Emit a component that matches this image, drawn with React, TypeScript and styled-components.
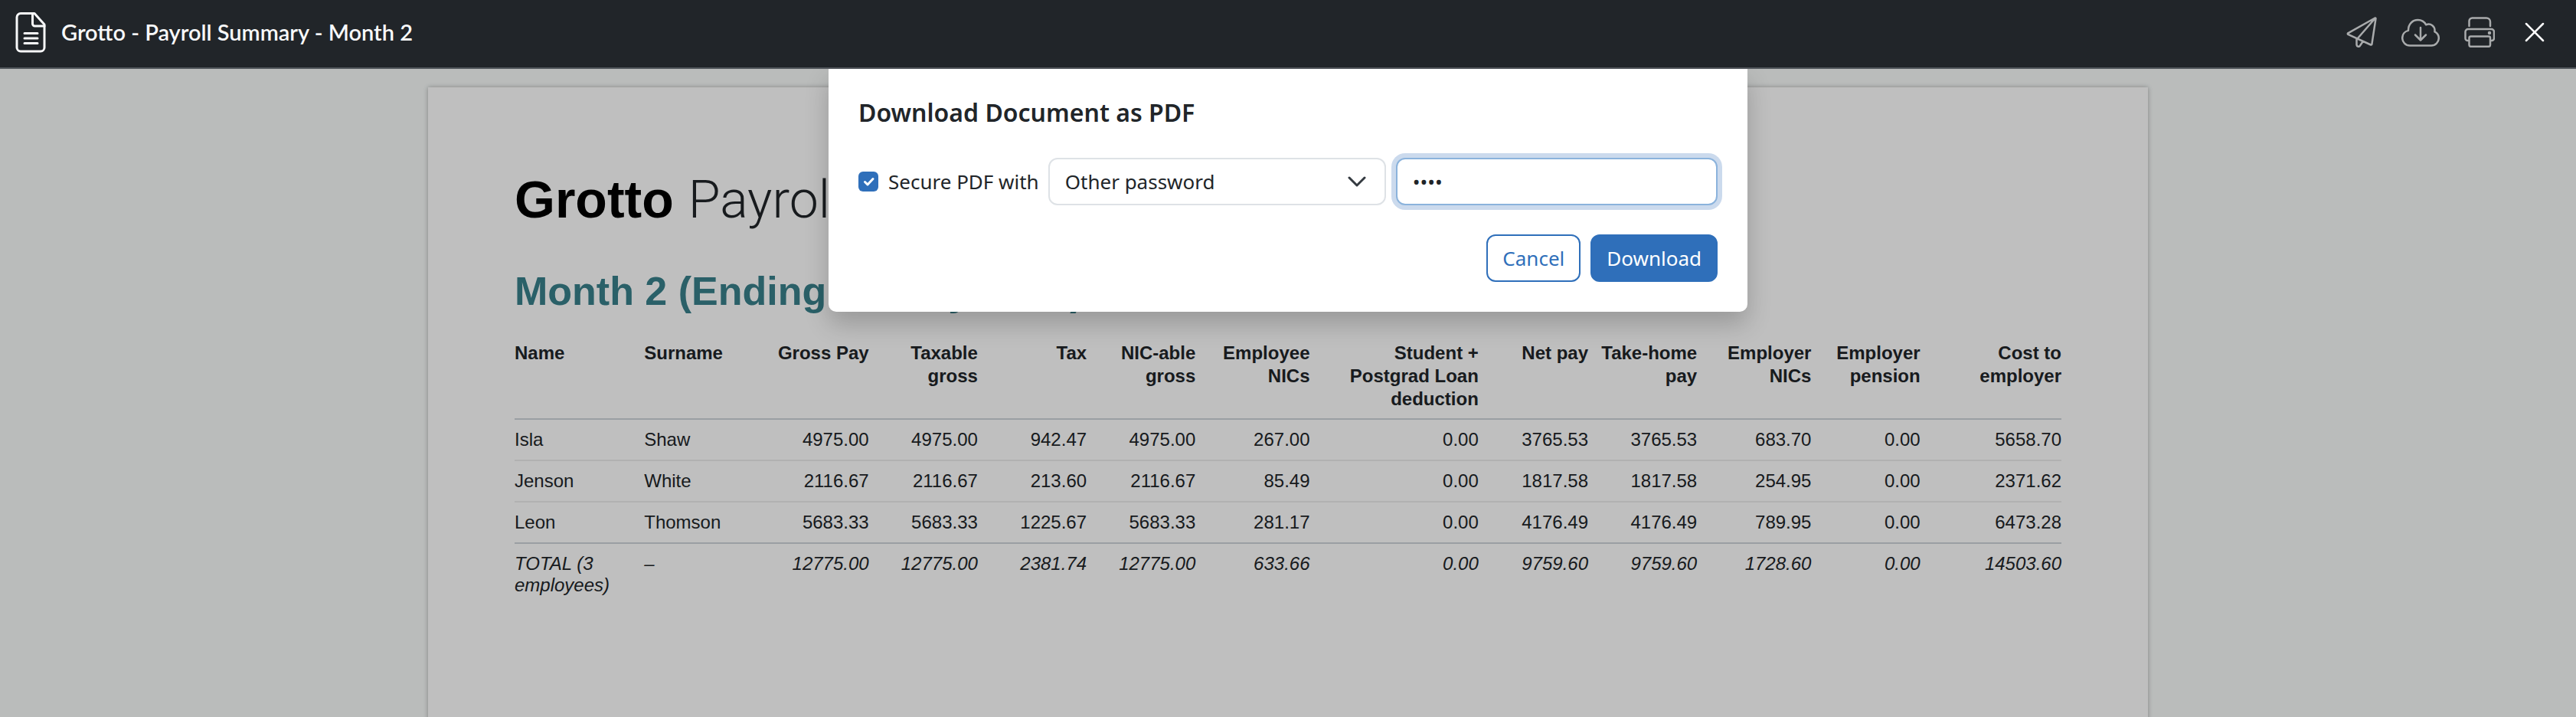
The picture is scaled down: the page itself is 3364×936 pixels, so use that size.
import React from "react";
import styled, { createGlobalStyle } from "styled-components";

const GlobalStyle = createGlobalStyle`
  *, *::before, *::after { box-sizing: border-box; }
  html, body, #root { height: 100%; }
  body {
    margin: 0;
    color: #212529;
    background: #f8fbfa;
    font-family: "Noto Sans", "Open Sans", sans-serif;
    overflow: hidden;
  }
  h1, h2, p { margin: 0; }
`;

const Viewer = styled.div`
  display: flex;
  flex-direction: column;
  height: 100%;
`;

const Toolbar = styled.header`
  display: flex;
  align-items: center;
  justify-content: space-between;
  height: 90px;
  flex-shrink: 0;
  padding: 0 34px 4px 20px;
  background: #212529;
  border-bottom: 2px solid #54595e;
`;

const ToolbarTitle = styled.div`
  display: flex;
  align-items: center;
  gap: 20px;
  color: #f8f9fa;
`;

const DocumentName = styled.h1`
  font-family: Lato, sans-serif;
  font-size: 29px;
  line-height: 36px;
  font-weight: 600;
  white-space: nowrap;
`;

const ToolbarActions = styled.nav`
  display: flex;
  align-items: center;
  gap: 32px;
`;

const IconButton = styled.button<{ $bright?: boolean }>`
  display: flex;
  padding: 0;
  border: 0;
  background: none;
  color: ${(p) => (p.$bright ? "#ffffff" : "#a9abac")};
  cursor: pointer;
`;

const Icon = styled.svg`
  display: block;
  fill: none;
  stroke: currentColor;
  stroke-linecap: round;
  stroke-linejoin: round;
`;

const Stage = styled.main`
  position: relative;
  flex: 1;
  min-height: 0;
  padding: 24px 24px 0;
  overflow: hidden;
`;

const Paper = styled.article`
  max-width: 2246px;
  min-height: 1588px;
  margin: 0 auto;
  padding: 113px;
  background: #ffffff;
  box-shadow: 0 0 6px rgba(0, 0, 0, 0.3);
  font-family: "Liberation Sans", Arial, sans-serif;
`;

const CompanyHeading = styled.h1`
  font-size: 68px;
  line-height: 66px;
  font-weight: 700;
  color: #000000;
  white-space: nowrap;
`;

const LightText = styled.span`
  font-family: Roboto, "Liberation Sans", sans-serif;
  font-weight: 300;
  color: #212529;
`;

const PeriodHeading = styled.h2`
  margin-top: 56px;
  font-size: 52px;
  line-height: 60px;
  font-weight: 700;
  color: #39808b;
  white-space: nowrap;
`;

const PayTable = styled.table`
  width: 100%;
  margin-top: 36px;
  border-collapse: collapse;
  table-layout: fixed;
  font-size: 24px;
  line-height: 28px;
`;

const HeadCell = styled.th<{ $left?: boolean }>`
  padding: 0 0 10px;
  line-height: 30px;
  font-weight: 700;
  text-align: ${(p) => (p.$left ? "left" : "right")};
  vertical-align: top;
  border-bottom: 2px solid #ced4da;
`;

const BodyRow = styled.tr`
  border-bottom: 2px solid #eceded;
  &:last-child { border-bottom-color: #ced4da; }
`;

const TotalRow = styled.tr`
  font-style: italic;
`;

const Cell = styled.td<{ $left?: boolean }>`
  padding: 12px 0;
  text-align: ${(p) => (p.$left ? "left" : "right")};
  vertical-align: top;
`;

const Backdrop = styled.div`
  position: absolute;
  inset: 0;
  display: flex;
  align-items: flex-start;
  justify-content: center;
  background: rgba(0, 0, 0, 0.25);
`;

const Dialog = styled.form`
  width: 1200px;
  max-width: 100%;
  padding: 35px 39px 39px;
  background: #ffffff;
  border-radius: 0 0 10px 10px;
  box-shadow: 0 16px 32px rgba(0, 0, 0, 0.2);
`;

const DialogTitle = styled.h2`
  font-size: 32px;
  line-height: 44px;
  font-weight: 600;
`;

const FieldRow = styled.div`
  display: flex;
  align-items: center;
  margin-top: 37px;
  font-size: 26px;
`;

const SecureLabel = styled.label`
  display: flex;
  align-items: center;
  gap: 13px;
  flex-shrink: 0;
  margin-right: 12px;
  line-height: 36px;
`;

const Tick = styled.input`
  appearance: none;
  width: 26px;
  height: 26px;
  margin: 0;
  border-radius: 6px;
  background: #2f6fba;
`;

const TickBox = styled.span`
  display: grid;
  > * { grid-area: 1 / 1; }
  > svg { pointer-events: none; }
`;

const SelectBox = styled.span`
  display: grid;
  align-items: center;
  flex: 0 1 441px;
  min-width: 0;
  margin-right: 13px;
  > * { grid-area: 1 / 1; }
  > svg { justify-self: end; margin-right: 26px; pointer-events: none; color: #343a40; }
`;

const PasswordKind = styled.select`
  appearance: none;
  width: 100%;
  height: 62px;
  padding: 0 60px 0 20px;
  border: 2px solid #dee2e6;
  border-radius: 12px;
  background: #ffffff;
  color: inherit;
  font: inherit;
`;

const PasswordInput = styled.input`
  flex: 1 1 0;
  min-width: 0;
  height: 62px;
  padding: 0 20px;
  border: 2px solid #8bb3dc;
  border-radius: 12px;
  outline: 0;
  box-shadow: 0 0 0 6px #cbdaed;
  background: #ffffff;
  color: inherit;
  font: inherit;
`;

const DialogActions = styled.div`
  display: flex;
  justify-content: flex-end;
  gap: 13px;
  margin-top: 38px;
`;

const Button = styled.button<{ $primary?: boolean }>`
  height: 62px;
  padding: 0 19px;
  border: 2px solid #2f6fba;
  border-radius: 12px;
  background: ${(p) => (p.$primary ? "#2f6fba" : "#ffffff")};
  color: ${(p) => (p.$primary ? "#ffffff" : "#2f6fba")};
  font: inherit;
  font-size: 26px;
  cursor: pointer;
`;

const columns = [
  { title: "Name", width: 169 },
  { title: "Surname", width: 151 },
  { title: "Gross Pay", width: 142 },
  { title: "Taxable gross", width: 142 },
  { title: "Tax", width: 142 },
  { title: "NIC-able gross", width: 142 },
  { title: "Employee NICs", width: 149 },
  { title: "Student + Postgrad Loan deduction", width: 220 },
  { title: "Net pay", width: 143 },
  { title: "Take-home pay", width: 142 },
  { title: "Employer NICs", width: 149 },
  { title: "Employer pension", width: 142 },
  { title: "Cost to employer", width: 184 },
];

const Col = styled.col<{ $w: number }>`
  width: ${(p) => p.$w}px;
`;

const employees = [
  ["Isla", "Shaw", "4975.00", "4975.00", "942.47", "4975.00", "267.00", "0.00", "3765.53", "3765.53", "683.70", "0.00", "5658.70"],
  ["Jenson", "White", "2116.67", "2116.67", "213.60", "2116.67", "85.49", "0.00", "1817.58", "1817.58", "254.95", "0.00", "2371.62"],
  ["Leon", "Thomson", "5683.33", "5683.33", "1225.67", "5683.33", "281.17", "0.00", "4176.49", "4176.49", "789.95", "0.00", "6473.28"],
];

const totals = ["TOTAL (3 employees)", "–", "12775.00", "12775.00", "2381.74", "12775.00", "633.66", "0.00", "9759.60", "9759.60", "1728.60", "0.00", "14503.60"];

export default function App() {
  return (
    <Viewer>
      <GlobalStyle />
      <Toolbar>
        <ToolbarTitle>
          <Icon width="40" height="54" viewBox="0 0 40 54" strokeWidth="3" aria-hidden="true">
            <path d="M7 2.500h18L38 17v30a5 5 0 0 1-5 5H7a5 5 0 0 1-5-5V7.500a5 5 0 0 1 5-5z" />
            <path d="M22.500 3v13a3 3 0 0 0 3 3H38M12 28.500h17M12 35h17M12 41.500h17" />
          </Icon>
          <DocumentName>Grotto - Payroll Summary - Month 2</DocumentName>
        </ToolbarTitle>
        <ToolbarActions>
          <IconButton type="button" aria-label="Send">
            <Icon width="40" height="40" viewBox="0 0 40 40" strokeWidth="2.5">
              <path d="M37.500 1.500 2.200 21.300a1 1 0 0 0 .1 1.600L32 36.500a1 1 0 0 0 1.400-.7L38.500 2.200a.7.7 0 0 0-1-.7zM37.800 1.700 14.500 28.500M13.500 28v8.500c.3 2.800 3.400 3 4.700.8l3.600-5.300" />
            </Icon>
          </IconButton>
          <IconButton type="button" aria-label="Download">
            <Icon width="50" height="40" viewBox="0 0 50 40" strokeWidth="2.5">
              <path d="M11 37.500A9.800 9.800 0 0 1 1.200 27.700c0-5 3.300-8.800 7.800-9.800C8.800 9.500 14.500 4 21.500 4c4.700 0 8.600 2.500 10.700 6.300 5.800-2.500 12.300 2 11.200 9 3.200 1.500 5.400 4.700 5.400 8.400a9.800 9.800 0 0 1-9.800 9.800z" />
              <path d="M25 14v16M18 23.500l7 7 7-7" />
            </Icon>
          </IconButton>
          <IconButton type="button" aria-label="Print">
            <Icon width="40" height="40" viewBox="0 0 40 40" strokeWidth="2.5">
              <path d="M6.500 12V5.500a4 4 0 0 1 4-4h18.500a5 5 0 0 1 5 5V12M6 31H4.500a3 3 0 0 1-3-3v-8.500a3.500 3.500 0 0 1 3.500-3.500h30.500a3.500 3.500 0 0 1 3.500 3.500V28a3 3 0 0 1-3 3H34.500" />
              <rect x="6.500" y="25.500" width="27.500" height="13.300" rx="2" />
              <circle cx="33" cy="21" r="1" fill="currentColor" />
            </Icon>
          </IconButton>
          <IconButton type="button" aria-label="Close" $bright>
            <Icon width="40" height="40" viewBox="0 0 40 40" strokeWidth="2.5">
              <path d="M9 9l22 22M31 9 9 31" />
            </Icon>
          </IconButton>
        </ToolbarActions>
      </Toolbar>
      <Stage>
        <Paper>
          <CompanyHeading>
            Grotto <LightText>Payroll</LightText>
          </CompanyHeading>
          <PeriodHeading>Month 2 (Ending 31 May 2023)</PeriodHeading>
          <PayTable>
            <colgroup>
              {columns.map((c) => <Col key={c.title} $w={c.width} />)}
            </colgroup>
            <thead>
              <tr>
                {columns.map((c, i) => <HeadCell key={c.title} scope="col" $left={i < 2}>{c.title}</HeadCell>)}
              </tr>
            </thead>
            <tbody>
              {employees.map((row) => (
                <BodyRow key={row[0]}>
                  {row.map((v, i) => <Cell key={i} $left={i < 2}>{v}</Cell>)}
                </BodyRow>
              ))}
            </tbody>
            <tfoot>
              <TotalRow>
                {totals.map((v, i) => <Cell key={i} $left={i < 2}>{v}</Cell>)}
              </TotalRow>
            </tfoot>
          </PayTable>
        </Paper>
        <Backdrop>
          <Dialog role="dialog" aria-labelledby="dialog-title" onSubmit={(e) => e.preventDefault()}>
            <DialogTitle id="dialog-title">Download Document as PDF</DialogTitle>
            <FieldRow>
              <SecureLabel>
                <TickBox>
                  <Tick type="checkbox" defaultChecked />
                  <Icon width="26" height="26" viewBox="0 0 26 26" strokeWidth="3" color="#ffffff">
                    <path d="M8.500 13.500l3.500 3.500 7-7.500" />
                  </Icon>
                </TickBox>
                Secure PDF with
              </SecureLabel>
              <SelectBox>
                <PasswordKind aria-label="Password type" defaultValue="other">
                  <option value="other">Other password</option>
                </PasswordKind>
                <Icon width="24" height="14" viewBox="0 0 24 14" strokeWidth="3">
                  <path d="M2 2l10 10L22 2" />
                </Icon>
              </SelectBox>
              <PasswordInput type="password" aria-label="Password" defaultValue="abcd" />
            </FieldRow>
            <DialogActions>
              <Button type="button">Cancel</Button>
              <Button type="submit" $primary>Download</Button>
            </DialogActions>
          </Dialog>
        </Backdrop>
      </Stage>
    </Viewer>
  );
}
